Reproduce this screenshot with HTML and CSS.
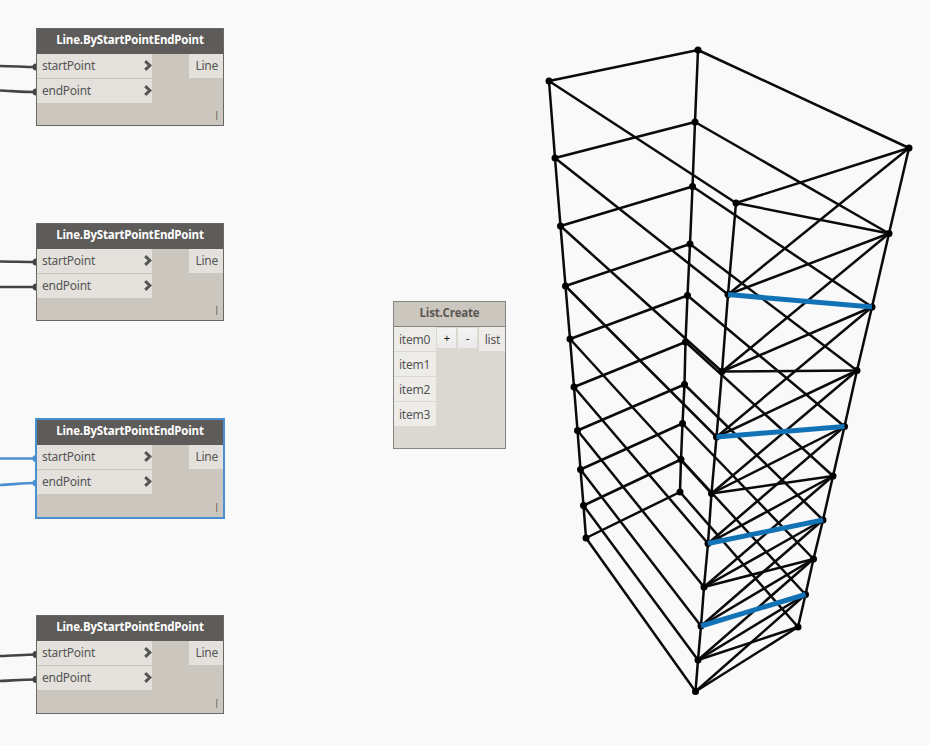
FILE: index.html
```html
<!DOCTYPE html>
<html lang="en">
<head>
  <meta charset="UTF-8">
  <title>Line.ByStartPointEndPoint</title>
  <meta name="viewport" content="width=device-width, initial-scale=1.0">
  <link rel="stylesheet" href="styles.css">
</head>
<body>
  <div class="workspace">
    <svg class="canvas" width="929" height="745" viewBox="0 0 929 745">
      <g id="model" class="model"></g>
      <g class="wires">
        <path d="M0 66 C12 66 24 67 36 67"/>
        <path d="M0 90.5 C12 91 24 92 36 92"/>
        <path d="M0 261.5 C12 261.5 24 262 36 262"/>
        <path d="M0 287 H36"/>
        <path d="M0 656 C12 656 24 654.5 36 654.5"/>
        <path d="M0 681 C12 680.5 24 679.5 36 679.5"/>
      </g>
      <g class="wires wires-selected">
        <path d="M0 458.5 H36"/>
        <path d="M0 485 C12 484.5 24 483 36 483"/>
      </g>
      <g class="ends">
        <circle cx="36" cy="67" r="3.5"/>
        <circle cx="36" cy="92" r="3.5"/>
        <circle cx="36" cy="262" r="3.5"/>
        <circle cx="36" cy="287" r="3.5"/>
        <circle cx="36" cy="654.5" r="3.5"/>
        <circle cx="36" cy="679.5" r="3.5"/>
      </g>
      <g class="ends ends-selected">
        <circle cx="36" cy="458.5" r="3.5"/>
        <circle cx="36" cy="483" r="3.5"/>
      </g>
    </svg>

    <div class="node line-1">
      <div class="title">Line.ByStartPointEndPoint</div>
      <div class="ports">
        <div class="inputs">
          <div class="port">startPoint <svg class="chevron" viewBox="0 0 8 11"><path d="M1.2 1.2 L5.8 5.5 L1.2 9.8"/></svg></div>
          <div class="port">endPoint <svg class="chevron" viewBox="0 0 8 11"><path d="M1.2 1.2 L5.8 5.5 L1.2 9.8"/></svg></div>
        </div>
        <div class="port output">Line</div>
      </div>
      <div class="lacing">|</div>
    </div>

    <div class="node line-2">
      <div class="title">Line.ByStartPointEndPoint</div>
      <div class="ports">
        <div class="inputs">
          <div class="port">startPoint <svg class="chevron" viewBox="0 0 8 11"><path d="M1.2 1.2 L5.8 5.5 L1.2 9.8"/></svg></div>
          <div class="port">endPoint <svg class="chevron" viewBox="0 0 8 11"><path d="M1.2 1.2 L5.8 5.5 L1.2 9.8"/></svg></div>
        </div>
        <div class="port output">Line</div>
      </div>
      <div class="lacing">|</div>
    </div>

    <div class="node line-3 selected">
      <div class="title">Line.ByStartPointEndPoint</div>
      <div class="ports">
        <div class="inputs">
          <div class="port">startPoint <svg class="chevron" viewBox="0 0 8 11"><path d="M1.2 1.2 L5.8 5.5 L1.2 9.8"/></svg></div>
          <div class="port">endPoint <svg class="chevron" viewBox="0 0 8 11"><path d="M1.2 1.2 L5.8 5.5 L1.2 9.8"/></svg></div>
        </div>
        <div class="port output">Line</div>
      </div>
      <div class="lacing">|</div>
    </div>

    <div class="node line-4">
      <div class="title">Line.ByStartPointEndPoint</div>
      <div class="ports">
        <div class="inputs">
          <div class="port">startPoint <svg class="chevron" viewBox="0 0 8 11"><path d="M1.2 1.2 L5.8 5.5 L1.2 9.8"/></svg></div>
          <div class="port">endPoint <svg class="chevron" viewBox="0 0 8 11"><path d="M1.2 1.2 L5.8 5.5 L1.2 9.8"/></svg></div>
        </div>
        <div class="port output">Line</div>
      </div>
      <div class="lacing">|</div>
    </div>

    <div class="node list-node">
      <div class="title">List.Create</div>
      <div class="ports">
        <div class="inputs">
          <div class="port">item0</div>
          <div class="port">item1</div>
          <div class="port">item2</div>
          <div class="port">item3</div>
        </div>
        <div class="buttons">
          <button>+</button>
          <button>-</button>
        </div>
        <div class="port output">list</div>
      </div>
    </div>
  </div>

  <script>
    // tower corners, top to bottom
    const left = [[549,81],[555,158],[560.5,226],[565.5,286],[570,339],[574,387],[577.5,430.5],[580.5,469.5],[583.5,505.5],[586,538]];
    const back = [[698,50],[695,122],[692.5,186.5],[690,244],[687.5,295.5],[685.5,342],[684.5,384.5],[682.5,423.5],[681,459.5],[680,492]];
    const right = [[909,148],[889,233.5],[872,307],[857,370.5],[844.5,426.5],[833,476],[823,520],[813.5,559],[805.5,594.5],[798,627]];
    const front = [[736,203],[728,294.5],[722,371.5],[716.5,437],[711.5,493.5],[708,543.5],[704,587],[701,626],[698,660],[695.5,691.5]];

    const model = document.getElementById('model');

    function add(tag, attrs) {
      const el = document.createElementNS('http://www.w3.org/2000/svg', tag);
      for (const key in attrs) el.setAttribute(key, attrs[key]);
      model.appendChild(el);
    }

    function line(a, b, cls) {
      add('line', { x1: a[0], y1: a[1], x2: b[0], y2: b[1], class: cls || 'edge' });
    }

    [left, back, right, front].forEach(col => {
      for (let i = 1; i < col.length; i++) line(col[i - 1], col[i]);
    });

    for (let i = 0; i < front.length; i++) {
      line(left[i], back[i]);
      line(back[i], right[i]);
      line(left[i], front[i]);
      line(front[i], right[i]);
      if (i > 0) line(front[i], right[i - 1]);
      if (i < 9 && i % 2 === 0) line(front[i], right[i + 1]);
    }

    [left, back, right, front].forEach(col => {
      col.forEach(p => add('circle', { cx: p[0], cy: p[1], r: 3.5 }));
    });

    // every second diagonal belongs to the selected node
    for (let i = 1; i < 9; i += 2) line(front[i], right[i + 1], 'edge-selected');
  </script>
</body>
</html>
```
FILE: styles.css
```css
:root {
  --bg: #f9f9f9;
  --dark: #5e5c5a;
  --node: #cbc6be;
  --port: #e4e1dc;
  --select: #4a90d0;
}

body {
  margin: 0;
  background: var(--bg);
  font-family: "Noto Sans", "Open Sans", sans-serif;
  font-size: 12px;
  color: #555;
}

.workspace {
  position: relative;
  width: 929px;
  height: 745px;
  overflow: hidden;
}

.canvas {
  display: block;
}

.edge {
  stroke: #0a0a0a;
  stroke-width: 2.5;
}

.edge-selected {
  stroke: #1272b6;
  stroke-width: 5;
}

.wires {
  fill: none;
  stroke: #444;
  stroke-width: 2.6;
}

.wires-selected {
  stroke: var(--select);
}

.ends {
  fill: #444;
}

.ends-selected {
  fill: var(--select);
}

.node {
  position: absolute;
  left: 36px;
  box-sizing: border-box;
  width: 188px;
  height: 98px;
  display: flex;
  flex-direction: column;
  background: var(--node);
  border: 1px solid #6a6866;
}

.line-1 { top: 28px; }
.line-2 { top: 223px; }
.line-3 { top: 419px; }

.line-4 {
  top: 615px;
  height: 99px;
}

.selected {
  outline: 1px solid var(--select);
  border-color: var(--select);
  height: 99px;
}

.title {
  height: 25px;
  line-height: 22px;
  background: var(--dark);
  color: #fff;
  font-family: "Open Sans", sans-serif;
  font-size: 11.5px;
  font-weight: 700;
  letter-spacing: -0.2px;
  text-align: center;
  white-space: nowrap;
}

.ports {
  display: flex;
  justify-content: space-between;
  align-items: flex-start;
}

.inputs {
  display: flex;
  flex-direction: column;
  gap: 1px;
  width: 115px;
  background: var(--node);
}

.port {
  display: flex;
  justify-content: space-between;
  align-items: center;
  box-sizing: border-box;
  height: 24px;
  padding: 0 0 1px 5px;
  background: var(--port);
  letter-spacing: -0.25px;
}

.output {
  padding-right: 5px;
  padding-left: 6px;
}

.chevron {
  width: 8px;
  height: 11px;
  fill: none;
  stroke: #555;
  stroke-width: 3;
}

.lacing {
  margin-top: auto;
  padding: 0 4px 4px;
  font-size: 8px;
  font-weight: 600;
  line-height: 12px;
  text-align: right;
}

.list-node {
  left: 393px;
  top: 301px;
  width: 113px;
  height: 148px;
  background: #dbd8d1;
  border-color: #858682;
}

.list-node .title {
  height: 24px;
  background: var(--node);
  color: #5a5653;
  border-bottom: 1px solid #858682;
}

.list-node .inputs {
  width: 42px;
  background: #dbd8d1;
}

.list-node .port {
  padding-top: 1px;
  background: #eeece9;
}

.buttons {
  display: flex;
  gap: 2px;
  padding-top: 1px;
}

.buttons button {
  width: 19px;
  height: 20px;
  padding: 0 0 2px;
  border: 0;
  background: linear-gradient(#f4f4f4, #e9e9e9);
  font-family: "Noto Sans", sans-serif;
  font-size: 11px;
  color: #111;
}
```
